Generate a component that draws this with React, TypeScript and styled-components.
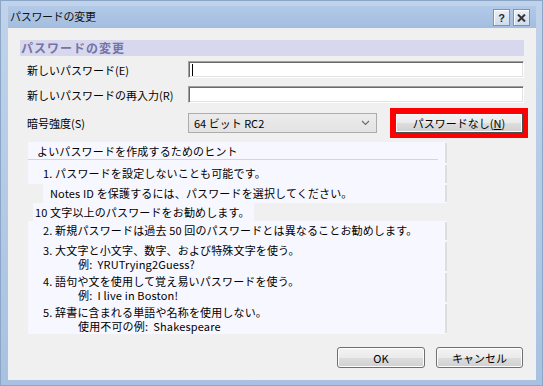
import React from 'react';
import styled, { createGlobalStyle } from 'styled-components';

const Global = createGlobalStyle`
  html, body { margin: 0; padding: 0; background: #ffffff; }
  body {
    font-family: "Noto Sans CJK JP", "Noto Sans", sans-serif;
    font-size: 11px;
    color: #000;
  }
  * { box-sizing: border-box; }
`;

const Win = styled.div`
  width: 543px;
  height: 386px;
  background: linear-gradient(#c0d3ea, #a9c1e0);
  border: 1px solid #8ca6c8;
  padding: 5px 6px 5px 7px;
  display: flex;
  flex-direction: column;
`;

const TitleBar = styled.div`
  height: 22px;
  display: flex;
  align-items: flex-start;
  background: linear-gradient(#b2cae8, #a3bde0);
  padding: 3px 0 0 2px;
`;

const TitleText = styled.div`
  flex: 1;
  font-size: 11px;
  line-height: 15px;
  letter-spacing: -0.3px;
  color: #111;
`;

const CapButtons = styled.div`
  display: flex;
  gap: 3px;
  margin-right: 6px;
`;

const CapButton = styled.div`
  width: 17px;
  height: 17px;
  border: 1px solid #7d93b2;
  box-shadow: inset 1px 1px 0 #ffffff;
  background: linear-gradient(#e9f0f8, #cfdcec);
  display: flex;
  align-items: center;
  justify-content: center;
  font-family: "Liberation Sans", sans-serif;
  font-weight: bold;
  font-size: 11px;
  color: #2b2b2b;
`;

const Client = styled.div`
  flex: 1;
  background: #f0f0f0;
  padding: 12px 12px 0 12px;
  display: flex;
  flex-direction: column;
`;

const SectionHead = styled.div`
  height: 16px;
  background: #d7d7ee;
  color: #7474a6;
  font-weight: bold;
  font-size: 12px;
  line-height: 16px;
  letter-spacing: 1px;
  padding-left: 1px;
`;

const Form = styled.div`
  display: grid;
  grid-template-columns: 161px 1fr;
  padding-left: 7px;
  margin-top: 5px;
  align-items: center;
`;

const Label = styled.div<{ $top?: number }>`
  line-height: 14px;
  margin-top: ${p => p.$top ?? 0}px;
`;

const Field = styled.div<{ $top?: number }>`
  height: 17px;
  margin-top: ${p => p.$top ?? 0}px;
  background: #fff;
  border-top: 1px solid #a0a0a0;
  border-left: 1px solid #a0a0a0;
  border-bottom: 1px solid #ffffff;
  border-right: 1px solid #ffffff;
  box-shadow: inset 1px 1px 0 #696969, inset -1px -1px 0 #e3e3e3;
  display: flex;
  align-items: center;
`;

const Caret = styled.span`
  width: 1px;
  height: 12px;
  background: #000;
  margin-left: 3px;
`;

const SelectRow = styled.div`
  margin-top: 9px;
  display: flex;
  align-items: center;
  gap: 18px;
  height: 21px;
`;

const Select = styled.div`
  width: 189px;
  height: 20px;
  margin-top: 1px;
  background: linear-gradient(#ececec, #e3e3e3);
  border: 1px solid #acacac;
  display: flex;
  align-items: center;
  justify-content: space-between;
  padding: 0 6px 0 5px;
  line-height: 14px;
`;

const Button = styled.div<{ $w: number }>`
  width: ${p => p.$w}px;
  height: 21px;
  border: 1px solid #707070;
  border-radius: 3px;
  background: linear-gradient(#f3f3f3 0%, #ebebeb 50%, #dddddd 51%, #d0d0d0 100%);
  box-shadow: inset 0 0 0 1px #fcfcfc;
  display: flex;
  align-items: center;
  justify-content: center;
  line-height: 14px;
  color: #000;
`;

const MarkedButton = styled(Button)`
  height: 20px;
  border-color: #4d4d4d;
  border-radius: 0;
  outline: 5px solid #ff0000;
  outline-offset: 0;
`;

const Ul = styled.span`
  text-decoration: underline;
`;

const Hints = styled.div`
  margin: 9px 0 0 8px;
  width: 419px;
  display: flex;
  flex-direction: column;
  letter-spacing: 0.15px;
`;

const HintRow = styled.div<{ $h: number; $inset?: number; $width?: number; $pad: number; $edge?: boolean; $top?: number; $lh?: number }>`
  position: relative;
  height: ${p => p.$h}px;
  margin-left: ${p => p.$inset ?? 0}px;
  width: ${p => (p.$width ? `${p.$width}px` : 'auto')};
  background: #f7f7ff;
  padding: ${p => p.$top ?? 3}px 0 0 ${p => p.$pad}px;
  line-height: ${p => p.$lh ?? 13}px;
  white-space: pre;
  &::after {
    content: '';
    display: ${p => (p.$edge ? 'block' : 'none')};
    position: absolute;
    right: 0;
    top: 1px;
    bottom: 1px;
    width: 2px;
    background: #dedede;
  }
`;

const HintHead = styled.div`
  height: 15px;
  margin-right: 9px;
  border-bottom: 1px solid #d3d3e3;
  padding-left: 9px;
  line-height: 13px;
`;

const Sub = styled.div`
  padding-left: 35px;
`;

const Footer = styled.div`
  margin-top: 13px;
  display: flex;
  justify-content: flex-end;
  gap: 11px;
  padding-right: 1px;
`;

const Chevron = () => (
  <svg width="9" height="6" viewBox="0 0 9 6">
    <path d="M1 1 L4.5 4.5 L8 1" fill="none" stroke="#6a6a6a" strokeWidth="1.1" />
  </svg>
);

const CloseGlyph = () => (
  <svg width="9" height="8" viewBox="0 0 9 8">
    <path d="M1 0.5 L8 7.5 M8 0.5 L1 7.5" stroke="#333" strokeWidth="2" />
  </svg>
);

export default function App() {
  return (
    <>
      <Global />
      <Win>
        <TitleBar>
          <TitleText>パスワードの変更</TitleText>
          <CapButtons>
            <CapButton>?</CapButton>
            <CapButton>
              <CloseGlyph />
            </CapButton>
          </CapButtons>
        </TitleBar>
        <Client>
          <SectionHead>パスワードの変更</SectionHead>
          <Form>
            <Label>新しいパスワード(E)</Label>
            <Field>
              <Caret />
            </Field>
            <Label $top={8}>新しいパスワードの再入力(R)</Label>
            <Field $top={8} />
            <Label $top={9}>暗号強度(S)</Label>
            <SelectRow>
              <Select>
                <span>64 ビット RC2</span>
                <Chevron />
              </Select>
              <MarkedButton $w={128}>
                パスワードなし(<Ul>N</Ul>)
              </MarkedButton>
            </SelectRow>
          </Form>
          <Hints>
            <HintRow $h={22} $pad={0} $edge>
              <HintHead>よいパスワードを作成するためのヒント</HintHead>
            </HintRow>
            <HintRow $h={20} $pad={15} $edge>
              1. パスワードを設定しないことも可能です。
            </HintRow>
            <HintRow $h={19} $inset={15} $pad={7} $edge>
              Notes ID を保護するには、パスワードを選択してください。
            </HintRow>
            <HintRow $h={18} $inset={5} $width={221} $pad={2}>
              10 文字以上のパスワードをお勧めします。
            </HintRow>
            <HintRow $h={20} $pad={15} $edge>
              2. 新規パスワードは過去 50 回のパスワードとは異なることお勧めします。
            </HintRow>
            <HintRow $h={31} $pad={15} $edge $top={2} $lh={14}>
              3. 大文字と小文字、数字、および特殊文字を使う。
              <Sub>{'例:  YRUTrying2Guess?'}</Sub>
            </HintRow>
            <HintRow $h={31} $pad={15} $edge $top={2} $lh={14}>
              4. 語句や文を使用して覚え易いパスワードを使う。
              <Sub>{'例:  I live in Boston!'}</Sub>
            </HintRow>
            <HintRow $h={31} $pad={15} $edge $top={2} $lh={14}>
              5. 辞書に含まれる単語や名称を使用しない。
              <Sub>{'使用不可の例:  Shakespeare'}</Sub>
            </HintRow>
          </Hints>
          <Footer>
            <Button $w={88}>OK</Button>
            <Button $w={87}>キャンセル</Button>
          </Footer>
        </Client>
      </Win>
    </>
  );
}
